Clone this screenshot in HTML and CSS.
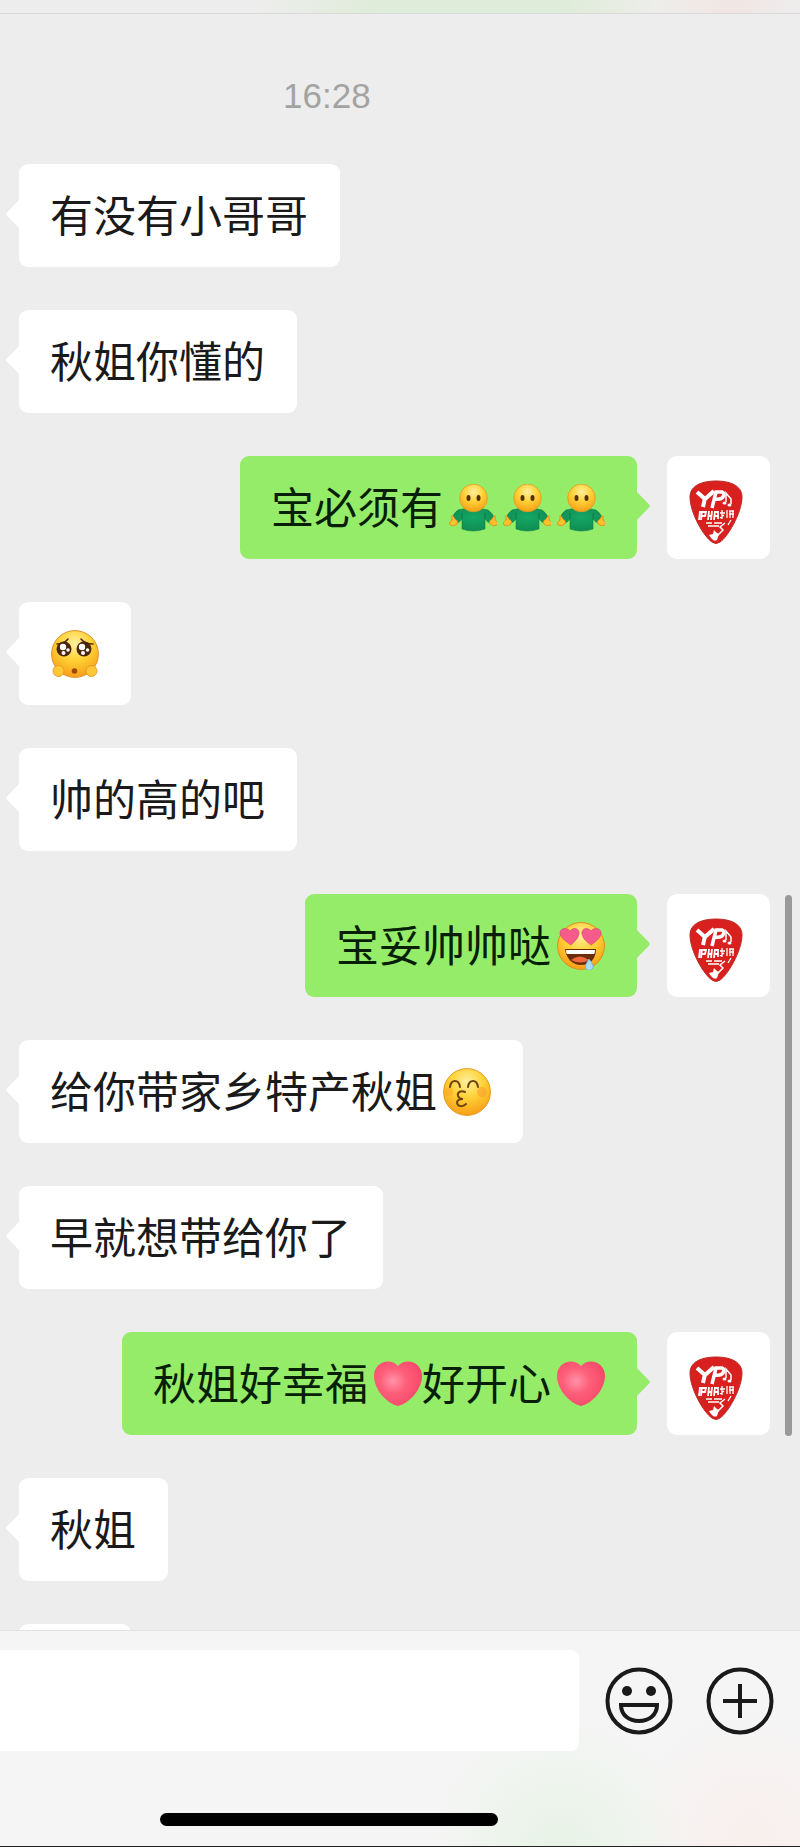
FILE: index.html
```
<!DOCTYPE html>
<html lang="zh-CN">
  <head>
    <meta charset="UTF-8" />
    <meta name="viewport" content="width=device-width, initial-scale=1.0" />
    <title>聊天</title>
    <link rel="stylesheet" href="styles.css">
  </head>
  <body>
    <svg class="sprite" aria-hidden="true">
      <defs>
        <radialGradient id="skin" cx="50%" cy="28%" r="75%">
          <stop offset="0" stop-color="#fff0a0" />
          <stop offset="0.45" stop-color="#ffd338" />
          <stop offset="1" stop-color="#f79a14" />
        </radialGradient>
        <radialGradient id="shirt" cx="50%" cy="40%" r="65%">
          <stop offset="0" stop-color="#14a866" />
          <stop offset="1" stop-color="#0f8a50" />
        </radialGradient>
        <radialGradient id="love" cx="40%" cy="44%" r="62%">
          <stop offset="0" stop-color="#ff93a8" />
          <stop offset="0.45" stop-color="#fd5f79" />
          <stop offset="1" stop-color="#f6486a" />
        </radialGradient>
      </defs>
      <symbol id="person" viewBox="0 0 48 48">
        <path d="M9 26 Q4 29 3 36 L8 39 Q11 38 13 35 L13 45 Q24 49 36 45 L36 35 Q38 38 41 39 L46 36 Q44 29 39 26 Q24 22 9 26Z" fill="url(#shirt)" stroke="#14804c" stroke-width="0.6" />
        <path d="M13 35 V29 M36 35 V29" stroke="#0b7a45" stroke-width="1" />
        <g fill="#ffc12e" stroke="#e08a1c" stroke-width="0.8">
          <path d="M3 34 Q2 31 4 32 L6 35 Q10 37 8 40 Q5 43 1 41 Q-1 38 3 36Z" />
          <path d="M46 34 Q47 31 45 32 L43 35 Q39 37 41 40 Q44 43 48 41 Q50 38 46 36Z" />
        </g>
        <circle cx="24.500" cy="14" r="13.800" fill="url(#skin)" stroke="#e39a22" stroke-width="0.8" />
        <ellipse cx="19.500" cy="14" rx="2" ry="3" fill="#553006" />
        <ellipse cx="29.500" cy="14" rx="2" ry="3" fill="#553006" />
      </symbol>
      <symbol id="pleading" viewBox="0 0 48 48">
        <circle cx="24" cy="24" r="23.400" fill="url(#skin)" stroke="#d9912a" stroke-width="1" />
        <path d="M6 14 Q13 14 17 9 M42 14 Q34 14 30 9" fill="none" stroke="#5a2c0a" stroke-width="1.600" stroke-linecap="round" />
        <circle cx="13" cy="19" r="7.500" fill="#4a2508" />
        <circle cx="33" cy="19" r="7.500" fill="#4a2508" />
        <g fill="#fff">
          <circle cx="12" cy="17" r="3.200" />
          <circle cx="31" cy="17" r="3.200" />
          <circle cx="17" cy="20" r="1.800" />
          <circle cx="36.500" cy="20" r="1.800" />
          <circle cx="12.500" cy="23" r="2" />
          <circle cx="32" cy="23" r="2" />
        </g>
        <circle cx="23.500" cy="41" r="2.800" fill="#9b4a0c" />
        <g fill="#ffc637" stroke="#e39420" stroke-width="0.8">
          <circle cx="7.500" cy="41" r="5.500" />
          <circle cx="40.500" cy="41" r="5.500" />
        </g>
      </symbol>
      <symbol id="drool" viewBox="0 0 48 48">
        <circle cx="24" cy="24" r="23.400" fill="url(#skin)" stroke="#e08c1c" stroke-width="1" />
        <path d="M14 23 C8 19 3 15 3 11 C3 6 10 5 13 9 C17 4 23 7 22 12 C21 17 17 20 14 23Z" fill="#f55c8c" stroke="#dc3d70" stroke-width="0.6" />
        <path d="M34 23 C30 20 26 17 25 12 C24 7 30 4 34 9 C37 5 44 6 44 11 C44 15 40 19 34 23Z" fill="#f55c8c" stroke="#dc3d70" stroke-width="0.6" />
        <path d="M8 27 H39 C39 37 33 43 24 43 C15 43 9 36 8 27Z" fill="#6b2c09" />
        <path d="M9 28 H38 Q38 31 37 32 H10 Q9 31 9 28Z" fill="#fff" />
        <path d="M14 38 Q23 31 32 38 Q24 43 14 38Z" fill="#f2693c" />
        <path d="M32 37 Q27 44 29 47 Q33 50 36 46 Q37 43 32 37Z" fill="#a9dcf5" stroke="#6aaed4" stroke-width="0.8" />
      </symbol>
      <symbol id="kiss" viewBox="0 0 48 48">
        <circle cx="24" cy="24" r="23.400" fill="url(#skin)" stroke="#e39a22" stroke-width="1" />
        <circle cx="6" cy="24" r="4" fill="#fa9a2c" opacity="0.4" />
        <circle cx="39" cy="24" r="5" fill="#fa8a2c" opacity="0.4" />
        <g fill="none" stroke="#70440c" stroke-width="2" stroke-linecap="round">
          <path d="M7 19 C8 11 16 11 17 19 M25 19 C26 11 34 11 35 19" />
          <path d="M22 24 C18 22 14 24 15 28 Q16 31 20 31 Q14 31 14 35 C15 39 20 39 23 36" />
        </g>
      </symbol>
      <symbol id="heart" viewBox="0 0 48 48">
        <path d="M24 46 C12 43 0 29 0 16 C0 2 16 -3 24 6 C32 -3 48 2 48 16 C48 29 36 43 24 46Z" fill="url(#love)" />
      </symbol>
      <symbol id="pick" viewBox="0 0 54 64">
        <path d="M27 1 C40 1 53 5 53 17 C53 33 38 58 31 62 Q27 65 23 62 C15 57 1 33 1 17 C1 5 14 1 27 1Z" fill="#d8211f" stroke="#bb2a26" stroke-width="1" />
        <g fill="none" stroke="#fff">
          <path d="M8 12 L16 19 L25 11 M16 18 L14 27" stroke-width="4" />
          <path d="M23 28 L27 12 H33 Q36 13 34 17 Q32 20 26 19" stroke-width="3.500" />
          <path d="M37 22 V13 L42 19 V24" stroke-width="1.500" />
          <path d="M11 31 L10 40 M13 31 L12 40 M11 32 H17 L16 36 H12 M20 31 L19 40 M23 31 L22 40 M19 36 H23 M26 31 L25 40 M26 32 H29 V39 M25 36 H29" stroke-width="1.800" />
          <path d="M33 30 V39 M31 33 H36 M31 38 L35 35 M38 30 V38 M40 31 H45 M40 34 H45 M41 31 V38 M44 31 V38" stroke-width="1.300" />
          <path d="M17 43 H23 M25 43 H33 M19 46 H30 M42 40 L39 45" stroke-width="1.300" />
          <path d="M36 43 L31 47 L34 50 L28 56" stroke-width="1.500" />
        </g>
        <ellipse cx="35.500" cy="23" rx="2" ry="1.500" fill="#fff" />
        <ellipse cx="40.500" cy="25" rx="2" ry="1.500" fill="#fff" />
        <path d="M25 50 L28 53 L30 54 L28 60 Q25 62 22 58 L20 55 L24 54Z" fill="#fff" />
      </symbol>
    </svg>

    <header class="topbar"></header>

    <main class="chat">
      <time class="time" datetime="16:28">16:28</time>
      <div class="row"><p class="bubble">有没有小哥哥</p></div>
      <div class="row"><p class="bubble">秋姐你懂的</p></div>
      <div class="row mine">
        <p class="bubble">宝必须有<svg class="emoji"><use href="#person" /></svg><svg class="emoji"><use href="#person" /></svg><svg class="emoji"><use href="#person" /></svg></p>
        <div class="avatar"><svg><use href="#pick" /></svg></div>
      </div>
      <div class="row"><p class="bubble solo"><svg class="emoji"><use href="#pleading" /></svg></p></div>
      <div class="row"><p class="bubble">帅的高的吧</p></div>
      <div class="row mine">
        <p class="bubble">宝妥帅帅哒<svg class="emoji"><use href="#drool" /></svg></p>
        <div class="avatar"><svg><use href="#pick" /></svg></div>
      </div>
      <div class="row"><p class="bubble">给你带家乡特产秋姐<svg class="emoji"><use href="#kiss" /></svg></p></div>
      <div class="row"><p class="bubble">早就想带给你了</p></div>
      <div class="row mine">
        <p class="bubble">秋姐好幸福<svg class="emoji"><use href="#heart" /></svg>好开心<svg class="emoji"><use href="#heart" /></svg></p>
        <div class="avatar"><svg><use href="#pick" /></svg></div>
      </div>
      <div class="row"><p class="bubble">秋姐</p></div>
      <div class="row"><p class="bubble solo"><svg class="emoji"><use href="#pleading" /></svg></p></div>
      <div class="scrollbar"></div>
    </main>

    <footer class="footer">
      <form class="composer">
        <input class="field" type="text" aria-label="消息" />
        <button class="icon" type="button" aria-label="表情">
          <svg viewBox="0 0 68 68" fill="none" stroke="#1a1a1a" stroke-width="4">
            <circle cx="34" cy="34" r="31.500" />
            <circle cx="22" cy="24" r="5" fill="#1a1a1a" stroke="none" />
            <circle cx="46" cy="24" r="5" fill="#1a1a1a" stroke="none" />
            <path d="M16 38 H52 C52 48 44 54 34 54 C24 54 16 48 16 38Z" />
          </svg>
        </button>
        <button class="icon" type="button" aria-label="更多">
          <svg viewBox="0 0 68 68" fill="none" stroke="#1a1a1a" stroke-width="4">
            <circle cx="34" cy="34" r="31.500" />
            <path d="M34 17 V51 M17 34 H51" />
          </svg>
        </button>
      </form>
      <div class="home"></div>
    </footer>
  </body>
</html>
```
FILE: styles.css
```
* {
  margin: 0;
  padding: 0;
  box-sizing: border-box;
}
body {
  display: flex;
  flex-direction: column;
  height: 100vh;
  background: #ededed;
  color: #1a1a1a;
  font-family: "Noto Sans CJK SC", "Noto Sans", sans-serif;
}
.sprite {
  position: absolute;
  width: 0;
  height: 0;
}
.topbar {
  flex: none;
  height: 14px;
  border-bottom: 1px solid #d9d9d9;
  background: linear-gradient(90deg, #ededed 32%, #dfecd9 48%, #dfecd9 70%, #ededea 82%, #f1e6e4 92%, #ededed);
}
.chat {
  position: relative;
  flex: 1;
  display: flex;
  flex-direction: column;
  gap: 43px;
  min-height: 0;
  padding: 61px 30px 0 19px;
  overflow: hidden;
}
.time {
  width: 82%;
  margin-bottom: 4px;
  color: #a3a3a3;
  font-family: "Liberation Sans", sans-serif;
  font-size: 35px;
  line-height: 42px;
  text-align: center;
}
.row {
  flex: none;
  display: flex;
  gap: 30px;
}
.mine {
  justify-content: flex-end;
}
.bubble {
  position: relative;
  display: flex;
  align-items: center;
  height: 103px;
  padding: 0 32px 5px 31px;
  border-radius: 9px;
  background: #fff;
  font-size: 43px;
  line-height: 60px;
  white-space: nowrap;
}
/* speech tail */
.bubble::before {
  content: "";
  position: absolute;
  top: 35px;
  left: -13px;
  width: 14px;
  height: 30px;
  background: inherit;
  clip-path: polygon(100% 0, 10% 43%, 0 50%, 10% 57%, 100% 100%);
}
.mine .bubble {
  background: #95ec69;
  color: #061f06;
}
.mine .bubble::before {
  left: auto;
  right: -13px;
  clip-path: polygon(0 0, 90% 43%, 100% 50%, 90% 57%, 0 100%);
}
.emoji {
  width: 48px;
  height: 48px;
  margin: 5px 0 0 6px;
  overflow: visible;
}
.solo {
  padding-left: 32px;
}
.solo .emoji {
  margin-left: 0;
}
.avatar {
  display: flex;
  justify-content: center;
  align-items: center;
  width: 103px;
  height: 103px;
  padding: 8px 6px 0 0;
  border-radius: 10px;
  background: #fff;
}
.avatar svg {
  width: 54px;
  height: 64px;
}
.scrollbar {
  position: absolute;
  top: 881px;
  right: 8px;
  width: 7px;
  height: 541px;
  border-radius: 4px;
  background: #999;
}
.footer {
  flex: none;
  border-top: 1px solid #e2e2e2;
  border-bottom: 1px solid #222;
  background:
    radial-gradient(circle at 70% 100%, #e8f3e6, transparent 22%),
    radial-gradient(circle at 94% 95%, #f8efed, transparent 16%),
    #f5f5f5;
}
.composer {
  display: flex;
  align-items: center;
  gap: 33px;
  padding: 19px 26px 0 0;
}
.field {
  flex: 1;
  min-width: 0;
  height: 101px;
  margin-right: -7px;
  padding: 0 24px;
  border: 0;
  border-radius: 0 8px 8px 0;
  background: #fff;
  font: inherit;
  font-size: 43px;
}
.icon {
  width: 68px;
  height: 68px;
  border: 0;
  background: none;
}
.icon svg {
  display: block;
}
.home {
  width: 338px;
  height: 13px;
  margin: 62px 0 20px 20%;
  border-radius: 7px;
  background: #000;
}
```
